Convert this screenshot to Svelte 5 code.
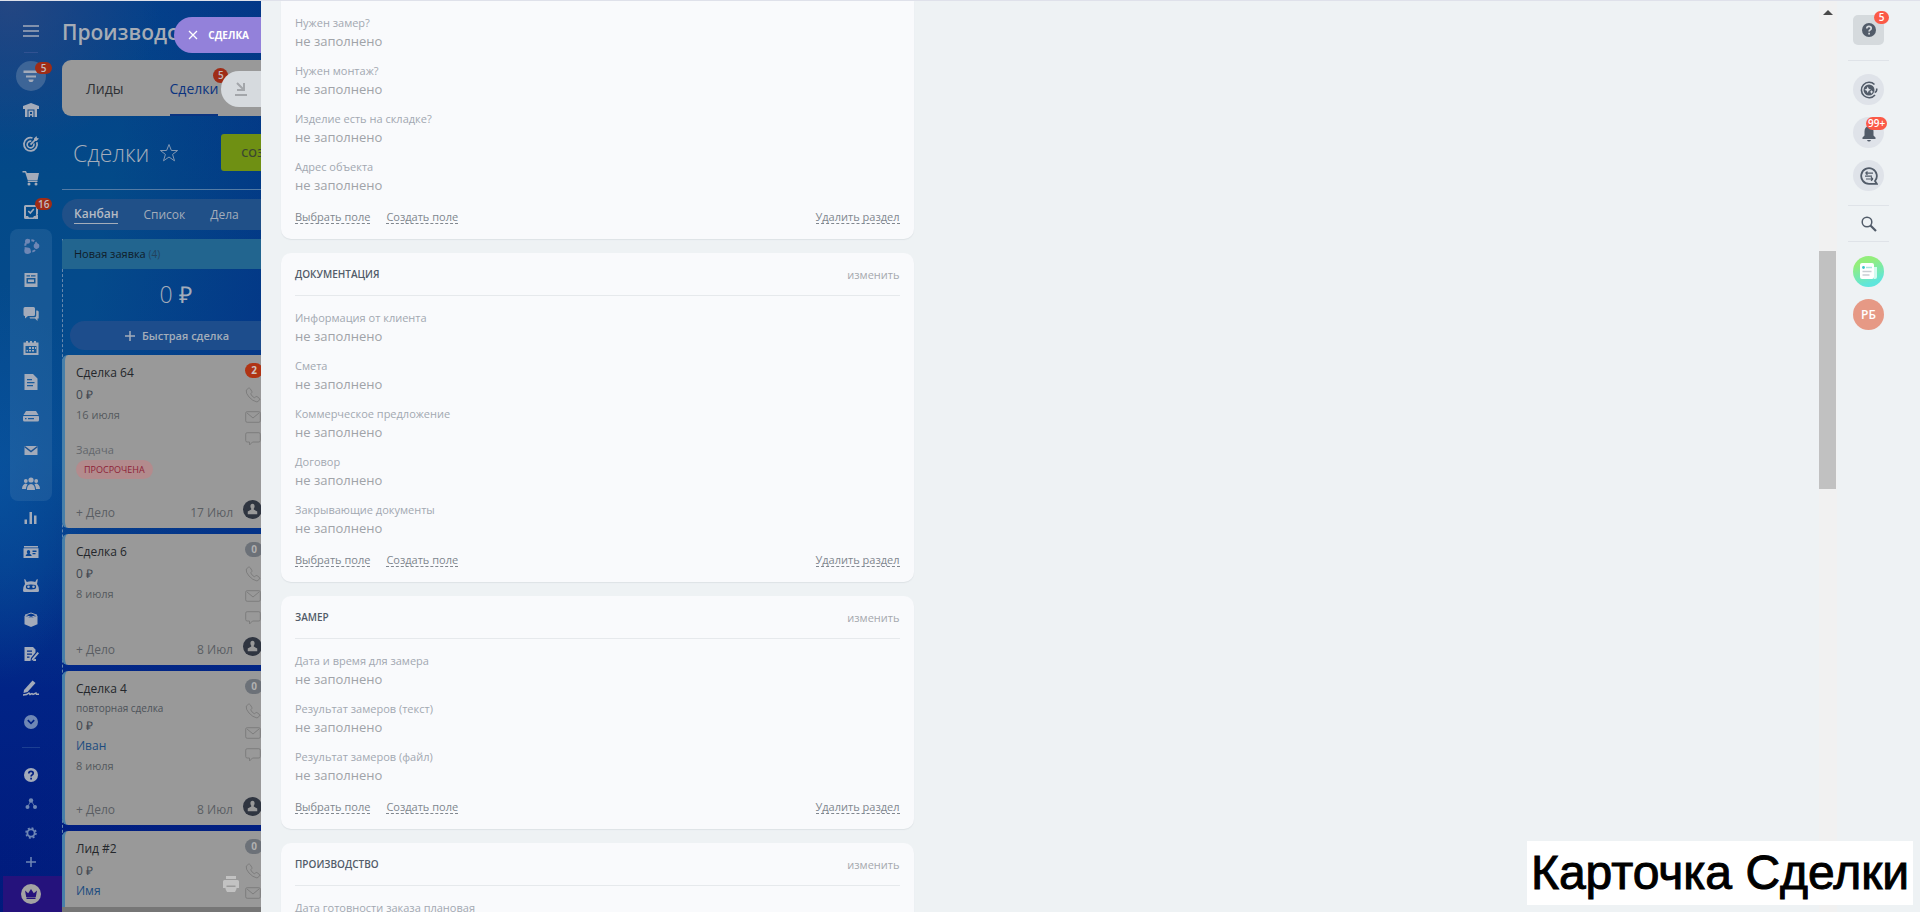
<script lang="ts">
	interface NavItem {
		icon: string;
		label: string;
		badge?: string;
		active?: boolean;
		dim?: boolean;
	}

	interface Deal {
		title: string;
		repeat?: boolean;
		client?: string;
		created: string;
		overdue?: boolean;
		due?: string;
		count: number;
	}

	interface Section {
		title?: string;
		fields: string[];
	}

	// 16x16 glyphs, painted with currentColor
	const icons: Record<string, string> = {
		menu: '<path d="M0 3h16M0 8h16M0 13h16" fill="none" stroke="currentColor" stroke-width="1.6"/>',
		funnel: '<path d="M.5 2.500h15v2.500H.5zM3 7.500h10v2H3zM5.500 11.500h5v1L9.300 14H6.700L5.500 12.500z"/>',
		house: '<path fill-rule="evenodd" d="M8 1 0 4v3h2V15h2.500V7.500h7V15H14V7h2V4zM5.500 8.500V15H7v-1.500h2V15h1.500V8.500zM7 10h2v2H7z"/>',
		target: '<g fill="none" stroke="currentColor"><path d="M13.800 6.200A6.600 6.600 0 1 1 9.500 2" stroke-width="1.800"/><path d="M10.800 7.500A3.400 3.400 0 1 1 8.300 5.200" stroke-width="1.600"/><path d="M7.500 8.700 13 3" stroke-width="1.800"/></g><path d="m11 2.500 2.500-2.500.5 2 2 .5L13.500 5H11z"/>',
		cart: '<path d="M-.5 1h3.500l.9 2H16l-1.500 7.500H4.800L2.200 2.500H-.5z"/><path d="M4.500 11h10v1H5z"/><circle cx="6" cy="14" r="1.500"/><circle cx="13" cy="14" r="1.500"/>',
		task: '<path fill-rule="evenodd" d="M2.500 1h11A1.500 1.500 0 0 1 15 2.500V10l-4 5H2.500A1.500 1.500 0 0 1 1 13.500v-11A1.500 1.500 0 0 1 2.500 1zM3 3v9h2l1 1.500h4l1-1.500h2V3z"/><path d="m5.300 7 2 2 3.500-4" fill="none" stroke="currentColor" stroke-width="1.600"/><path d="M13 11h2v4h-4z"/>',
		ring: '<circle cx="8" cy="8" r="5.800" fill="none" stroke="currentColor" stroke-width="2" stroke-dasharray="3 1.500"/><circle cx="4.500" cy="3.200" r="2.500"/><circle cx="13.500" cy="8" r="2.800"/><circle cx="4.500" cy="12.800" r="3.200"/>',
		feed: '<path fill-rule="evenodd" d="M1.500 1h13v14h-13zM3.500 3.200v1.300h3.500V3.200zM3.500 6v5.500h9V6zM5 7.500h6V10H5zM8 3.200v1.300h4.500V3.200z"/>',
		chat: '<path d="M2 1h8.500a1.500 1.500 0 0 1 1.500 1.500v6a1.500 1.500 0 0 1-1.500 1.500H5l-3 2.500V10a1.500 1.500 0 0 1-1.500-1.500v-6A1.500 1.500 0 0 1 2 1z"/><path d="M13.200 4.500h1a1.500 1.500 0 0 1 1.500 1.500v6.500h-1.200V15L12 12.500H7l-.5-1.200h5a1.700 1.700 0 0 0 1.700-1.700z"/>',
		calendar: '<path fill-rule="evenodd" d="M.5 2.500H3V1h2v1.500h2V1h2v1.500h2V1h2v1.500h2.500V15H.5zM2.500 6v7h11V6z"/><path d="M6 7h2v2H6zM9 7h2v2H9zM12 7h1v2h-1zM3.500 10h1.500v1.500H3.500zM6 10h2v1.500H6zM9 10h2v1.500H9z"/>',
		doc: '<path fill-rule="evenodd" d="M2 0h8l4.500 4.500V16h-13V0zM4 5h5v1.300H4zM4 8h7.500v1.300H4zM4 11h6v1.300H4z"/>',
		drive: '<path d="M3 3h10l2.500 4H.5z"/><path fill-rule="evenodd" d="M.8 8h14.400q.8 0 .8.800V12q0 1.500-1.500 1.500h-13Q0 13.500 0 12V8.800Q0 8 .8 8zM2 10v1.300h1.500V10zM5 10v1.300h6V10z"/>',
		mail: '<path d="M1.500 4h13v9h-13z"/><path d="m1.500 4.500 6.500 5 6.500-5" fill="none" stroke="#1a5292" stroke-width="1.500"/>',
		people: '<circle cx="8" cy="4" r="2.600"/><circle cx="2.800" cy="5" r="1.900"/><circle cx="13.200" cy="5" r="1.900"/><path d="M4 14c0-4 1.500-5.500 4-6 2.500.5 4 2 4 6zM-1 13C-1 9.500.8 8 2.800 7.500l1.800 1C3.500 9.700 3.200 11 3 13zM17 13c0-3.500-1.800-5-3.800-5.500l-1.800 1c1.100 1.200 1.400 2.500 1.600 4.500z"/>',
		bars: '<path d="M1.500 9.500H4V14H1.500zM6.500 2H9v12H6.500zM11 5.500h2.500V14H11z"/>',
		idcard: '<path d="M1 2h14v1.500H1z"/><path fill-rule="evenodd" d="M.5 4.300h15V14H.5zM5.500 6c-2 0-2 3-.8 3.600L2.800 11v1H8.500v-1L6.500 9.600C7.600 9 7.500 6 5.500 6zM9.500 6.500V8h4V6.500zM9.500 9v1.300h3V9z"/>',
		robot: '<path fill-rule="evenodd" d="m2 1 1.800 3q4.200-1.300 8.400 0L14 1l.8.500-.8 4.500Q16 8.500 16 12.500q0 1.500-1.500 1.500h-13Q0 14 0 12.500 0 8.500 2 6L1.200 1.500zM3.500 7Q2 9.500 4 11q4 .8 8 0 2-1.500.5-4-4.500-1-9 0z"/><circle cx="5.500" cy="8.800" r="1.300"/><circle cx="10.500" cy="8.800" r="1.300"/>',
		box: '<path d="M8 1 2 3.200 8 5.400l6-2.200z" fill="none" stroke="currentColor"/><path d="m1.500 3.700 6.500 2.300 6.500-2.300v8.600L8 15l-6.500-2.700z"/>',
		sign: '<path fill-rule="evenodd" d="M1.500 1H10l2.500 2.500v3L8 12l-.5 3h-6zM4 4.500v1.200h5V4.500zM4 7.500v1.200h5V7.500zM4 10.500v1.200h2.500v-1.200z"/><path d="m9 12.500 5.500-6.500 1.500 1.300-5.500 6.500-2 .7zM13 13h-1.500l-2 2H13z"/>',
		pen: '<path d="m1 10 8.500-9.500L12.500 3 4.500 12 .5 13z"/><path d="M0 15q4 0 6-2l1 1.500 2-1 1 1 3-1.500.5 1.300H16" fill="none" stroke="currentColor" stroke-width="1.400"/>',
		more: '<path fill-rule="evenodd" d="M8 1a7 7 0 1 0 0 14A7 7 0 0 0 8 1zM4.200 6.800l1.200-1.200L8 8.200l2.600-2.600 1.200 1.200L8 10.600z"/>',
		help: '<circle cx="8" cy="8" r="7"/><path d="M5.800 6.500Q5.800 4.300 8 4.300t2.200 2Q10.200 7.500 9 8q-.9.500-.9 1.500M8.100 10.800v1.600" fill="none" stroke="var(--hole)" stroke-width="1.700"/>',
		nodes: '<circle cx="8" cy="4.500" r="2.200"/><circle cx="4.500" cy="11" r="2"/><circle cx="12" cy="11" r="2"/><path d="m8 4.500-3.500 6.500M8 4.500l4 6.500" stroke="currentColor" stroke-width=".8"/>',
		gear: '<circle cx="8" cy="8" r="3.600" fill="none" stroke="currentColor" stroke-width="1.800"/><circle cx="8" cy="8" r="5" fill="none" stroke="currentColor" stroke-width="1.500" stroke-dasharray="2 1.927"/>',
		plus: '<path d="M8 3v10M3 8h10" fill="none" stroke="currentColor" stroke-width="1.500"/>',
		phone: '<path d="M3.500 1.200 1.300 3q-.8 3 2.700 7t8 5l2.600-2q.6-1-.3-1.700L12 9.600q-.8-.4-1.600.3l-.9.900Q7 9.800 5.700 6.800l1-1q.5-.7.100-1.500L5.200 1.700q-.8-1-1.700-.5z" fill="none" stroke="currentColor"/>',
		letter: '<rect x=".7" y="2.700" width="14.600" height="10.600" rx="1.500" fill="none" stroke="currentColor"/><path d="m2 4 6 5 6-5" fill="none" stroke="currentColor"/>',
		bubble: '<path d="M2.200 1.700h11.600q1.500 0 1.500 1.500v6.300q0 1.500-1.500 1.500H7.500L4.500 14v-3H2.200Q.7 11 .7 9.500V3.200q0-1.500 1.500-1.500z" fill="none" stroke="currentColor"/>',
		printer: '<path fill-rule="evenodd" d="M3 0h10v3H3zM1.500 4h13Q16 4 16 5.500V12h-2.500v1L12 16H4l-1.500-3v-1H0V5.500Q0 4 1.500 4zM3.500 9.500V11h9V9.500z"/>'
	};

	const nav: NavItem[] = [
		{ icon: 'funnel', label: 'CRM', badge: '5', active: true },
		{ icon: 'house', label: 'Склад' },
		{ icon: 'target', label: 'Маркетинг' },
		{ icon: 'cart', label: 'Магазин' },
		{ icon: 'task', label: 'Задачи', badge: '16' }
	];

	const groupNav: NavItem[] = [
		{ icon: 'ring', label: 'Совместная работа', dim: true },
		{ icon: 'feed', label: 'Лента' },
		{ icon: 'chat', label: 'Мессенджер' },
		{ icon: 'calendar', label: 'Календарь' },
		{ icon: 'doc', label: 'Документы' },
		{ icon: 'drive', label: 'Диск' },
		{ icon: 'mail', label: 'Почта' },
		{ icon: 'people', label: 'Группы' }
	];

	const tailNav: NavItem[] = [
		{ icon: 'bars', label: 'Аналитика' },
		{ icon: 'idcard', label: 'Сотрудники' },
		{ icon: 'robot', label: 'Автоматизация' },
		{ icon: 'box', label: 'Маркет' },
		{ icon: 'sign', label: 'Подпись' },
		{ icon: 'pen', label: 'Подпись для HR' },
		{ icon: 'more', label: 'Ещё', dim: true }
	];

	const toolNav: NavItem[] = [
		{ icon: 'help', label: 'Помощь' },
		{ icon: 'nodes', label: 'Карта сайта', dim: true },
		{ icon: 'gear', label: 'Настройки', dim: true },
		{ icon: 'plus', label: 'Добавить', dim: true }
	];

	const deals: Deal[] = [
		{ title: 'Сделка 64', created: '16 июля', overdue: true, due: '17 Июл', count: 2 },
		{ title: 'Сделка 6', created: '8 июля', due: '8 Июл', count: 0 },
		{ title: 'Сделка 4', repeat: true, client: 'Иван', created: '8 июля', due: '8 Июл', count: 0 },
		{ title: 'Лид #2', client: 'Имя', created: '8 июля', count: 0 }
	];

	const sections: Section[] = [
		{ fields: ['Нужен замер?', 'Нужен монтаж?', 'Изделие есть на складке?', 'Адрес объекта'] },
		{
			title: 'Документация',
			fields: ['Информация от клиента', 'Смета', 'Коммерческое предложение', 'Договор', 'Закрывающие документы']
		},
		{
			title: 'Замер',
			fields: ['Дата и время для замера', 'Результат замеров (текст)', 'Результат замеров (файл)']
		},
		{ title: 'Производство', fields: ['Дата готовности заказа плановая'] }
	];
</script>

{#snippet icon(name: string)}
	<svg class="icon" viewBox="0 0 16 16" aria-hidden="true">{@html icons[name]}</svg>
{/snippet}

{#snippet navButton(item: NavItem)}
	<button class="nav-item" class:active={item.active} class:dim={item.dim} aria-label={item.label}>
		<span class="nav-icon">{@render icon(item.icon)}</span>
		{#if item.badge}<span class="badge">{item.badge}</span>{/if}
	</button>
{/snippet}

<div class="app">
	<nav class="sidebar">
		<button class="burger" aria-label="Меню">{@render icon('menu')}</button>
		{#each nav as item (item.icon)}{@render navButton(item)}{/each}
		<div class="nav-group">
			{#each groupNav as item (item.icon)}{@render navButton(item)}{/each}
		</div>
		{#each tailNav as item (item.icon)}{@render navButton(item)}{/each}
		<div class="tools">
			{#each toolNav as item (item.icon)}{@render navButton(item)}{/each}
		</div>
		<button class="crown" aria-label="Тариф">
			<svg viewBox="0 0 20 20" aria-hidden="true">
				<circle cx="10" cy="10" r="10" fill="#a3a3a3" />
				<path d="m4 6.500 3.200 2.700L10 5l2.800 4.200L16 6.500 14.800 13H5.200zM5.500 13.500h9V15h-9z" fill="#25127c" />
			</svg>
		</button>
	</nav>

	<main class="board">
		<h1>Производство</h1>
		<div class="tabs">
			<a href="#leads">Лиды</a>
			<a href="#deals" class="current">Сделки<span class="badge">5</span></a>
		</div>
		<div class="heading">
			<h2>Сделки</h2>
			<svg class="star" viewBox="0 0 20 20" aria-hidden="true">
				<path d="m10 1.500 2.400 6h6.200l-5 3.900 1.900 6.400L10 14l-5.500 3.800 1.900-6.400-5-3.900h6.200z" />
			</svg>
			<button class="create">СОЗДАТЬ</button>
		</div>
		<div class="views">
			<a href="#kanban" class="current">Канбан</a>
			<a href="#list">Список</a>
			<a href="#todo">Дела</a>
		</div>
		<section class="column">
			<header>Новая заявка <span>(4)</span></header>
			<div class="sum">0 ₽</div>
			<button class="quick">{@render icon('plus')}Быстрая сделка</button>
			<div class="deals">
				{#each deals as deal (deal.title)}
					<article class="deal">
						<div class="deal-main">
							<div class="deal-text">
								<h3>{deal.title}</h3>
								{#if deal.repeat}<div class="repeat">повторная сделка</div>{/if}
								<div class="amount">0 ₽</div>
								{#if deal.client}<a class="client" href="#client">{deal.client}</a>{/if}
								<div class="date">{deal.created}</div>
								{#if deal.overdue}
									<div class="task">Задача</div>
									<span class="overdue">ПРОСРОЧЕНА</span>
								{/if}
							</div>
							<div class="contacts">
								<span class="count" class:hot={deal.count > 0}>{deal.count}</span>
								{@render icon('phone')}
								{@render icon('letter')}
								{@render icon('bubble')}
							</div>
						</div>
						{#if deal.due}
							<footer>
								<button>+ Дело</button>
								<span class="due">{deal.due}</span>
								<svg class="avatar" viewBox="0 0 18 18" aria-hidden="true">
									<circle cx="9" cy="9" r="9" fill="#2f3540" />
									<path d="M9 3.500c-2.500 0-2.300 3.500-1.200 4.500v1L4.500 11v2.500h9V11l-3.300-2V8C11.300 7 11.500 3.500 9 3.500z" fill="#999" />
								</svg>
							</footer>
						{/if}
					</article>
				{/each}
			</div>
		</section>
		<div class="hscroll"></div>
	</main>

	<div class="slider">
		<button class="slider-close">
			<svg viewBox="0 0 10 10" aria-hidden="true"><path d="m1 1 8 8M9 1 1 9" /></svg>
			СДЕЛКА
		</button>
		<button class="slider-collapse" aria-label="Свернуть">
			<svg viewBox="0 0 14 14" aria-hidden="true"><path d="m3 1 6 6M10 1v7H3M1 13h12" /></svg>
		</button>
		<button class="slider-print" aria-label="Печать">{@render icon('printer')}</button>

		<div class="card-area">
			<div class="sections">
				{#each sections as section}
					<section class="panel">
						{#if section.title}
							<header>
								<h3>{section.title}</h3>
								<button>изменить</button>
							</header>
						{/if}
						<dl>
							{#each section.fields as field (field)}
								<div class="field">
									<dt>{field}</dt>
									<dd>не заполнено</dd>
								</div>
							{/each}
						</dl>
						<footer>
							<a href="#pick">Выбрать поле</a>
							<a href="#new">Создать поле</a>
							<a href="#remove" class="remove">Удалить раздел</a>
						</footer>
					</section>
				{/each}
			</div>
		</div>

		<div class="scrollbar">
			<svg viewBox="0 0 10 5" aria-hidden="true"><path d="M5 0 10 5H0z" fill="#4a4a4a" /></svg>
			<div class="thumb"></div>
		</div>

		<aside class="rail">
			<button class="rail-help" aria-label="Помощь">
				{@render icon('help')}
				<span class="badge">5</span>
			</button>
			<hr />
			<div class="rounds">
				<button aria-label="Ассистент">
					<svg viewBox="0 0 18 18" aria-hidden="true">
						<path d="M14.500 3.500A7.700 7.700 0 1 0 15 14M16.700 7.500v1.500q0 2-2 2.500" fill="none" stroke="currentColor" stroke-width="1.600" />
						<circle cx="9" cy="9" r="5.500" />
						<path d="m7.700 5.500 1 2.300 2.300 1-2.300 1-1 2.300-1-2.300-2.300-1 2.300-1zM11.500 9l.6 1.300 1.400.6-1.400.6-.6 1.400-.6-1.400-1.300-.6 1.300-.6z" fill="#dfe3e9" />
					</svg>
				</button>
				<button aria-label="Уведомления">
					<svg viewBox="0 0 18 18" aria-hidden="true">
						<path d="M9 2q-4.500.5-4.500 5.500v4L2.500 13.500V15h13v-1.500l-2-2v-4Q13.500 2.500 9 2zM7 16h4q-.5 1.500-2 1.500T7 16z" />
					</svg>
					<span class="badge">99+</span>
				</button>
				<button aria-label="Чаты">
					<svg viewBox="0 0 18 18" aria-hidden="true">
						<path d="M16.800 16.800H9A7.800 7.800 0 1 1 15 14z" fill="none" stroke="currentColor" stroke-width="1.800" />
						<path d="M5.500 6.200H13M5.500 6.200l2-1.700M5.500 6.200l2 1.500M5 9.200h7M13 12H6M13 12l-2-1.700M13 12l-2 1.700" fill="none" stroke="currentColor" stroke-width="1.200" />
					</svg>
				</button>
			</div>
			<hr />
			<button class="search" aria-label="Поиск">
				<svg viewBox="0 0 16 16" aria-hidden="true">
					<circle cx="6" cy="6" r="4.800" fill="none" stroke="currentColor" stroke-width="1.500" />
					<path d="m9.500 9.500 5.500 5.500" stroke="currentColor" stroke-width="2.200" />
				</svg>
			</button>
			<hr />
			<div class="people">
				<button class="news" aria-label="Новости">
					<svg viewBox="0 0 18 18" aria-hidden="true">
						<path d="M14 4h3v10q0 2-2 2h-1z" fill="#d3fbf0" />
						<rect x="0" y="0" width="14" height="16" rx="2" fill="#fff" />
						<path d="M6 4.500h6" stroke="#a8e8df" stroke-width="1.500" />
						<circle cx="3.500" cy="4.500" r="1.400" fill="#3cc8c8" />
						<path d="M2.500 8.500h9M2.500 12h7" stroke="#c9ced3" stroke-width="1.300" />
					</svg>
				</button>
				<button class="user">РБ</button>
			</div>
		</aside>
	</div>

	<div class="caption">Карточка Сделки</div>
</div>

<style>
	:global(body) {
		margin: 0;
		overflow: hidden;
	}

	.app {
		position: relative;
		display: flex;
		height: 100vh;
		box-sizing: border-box;
		overflow: hidden;
		border-top: 1px solid #dfe1ea;
		font-family: 'Open Sans', sans-serif;
		background:
			radial-gradient(circle at 10px 0, rgba(44, 72, 128, 0.8), transparent 150px),
			radial-gradient(ellipse 90px 200px at 0 480px, rgba(9, 86, 165, 0.6), transparent),
			linear-gradient(100deg, transparent 140px, rgba(2, 34, 130, 0.45) 320px),
			linear-gradient(#04408a, #034a88 20%, #064a90 50%, #043c8c 62%, #012386 76%, #001a7c);
	}

	button {
		border: 0;
		padding: 0;
		background: none;
		font: inherit;
		color: inherit;
	}

	a {
		color: inherit;
		text-decoration: none;
	}

	h1,
	h2,
	h3,
	dl,
	dd {
		margin: 0;
		font-weight: 400;
	}

	.icon {
		display: block;
		flex: none;
		width: 16px;
		height: 16px;
		fill: currentColor;
		overflow: visible;
	}

	.badge {
		position: absolute;
		box-sizing: border-box;
		min-width: 15px;
		padding: 0 3px;
		border-radius: 8px;
		background: #9f2c16;
		color: #c3bcc0;
		font-size: 10px;
		font-weight: 600;
		line-height: 12px;
		text-align: center;
	}

	.sidebar {
		--hole: #021f80;
		display: flex;
		flex: 0 0 62px;
		flex-direction: column;
		align-items: center;
		color: #a3abba;
	}

	.burger {
		display: flex;
		justify-content: center;
		width: 14px;
		height: 30px;
		margin-top: 22px;
		margin-bottom: 6px;
		border-bottom: 1px solid #315292;
	}

	.nav-item {
		position: relative;
		display: flex;
		flex: none;
		align-items: center;
		justify-content: center;
		width: 42px;
		height: 34px;
	}

	.nav-icon {
		display: flex;
		align-items: center;
		justify-content: center;
		width: 30px;
		height: 30px;
		border-radius: 50%;
	}

	.active .nav-icon {
		background: #3d6597;
	}

	.nav-item .badge {
		top: 3px;
		left: 25px;
		min-width: 17px;
	}

	.dim {
		color: #6f87b5;
	}

	.nav-group {
		border-radius: 8px;
		background: rgba(80, 130, 180, 0.25);
	}

	.tools {
		display: flex;
		flex-direction: column;
		align-items: center;
		width: 18px;
		margin-top: 8px;
		padding-top: 12px;
		border-top: 1px solid #1c3f92;
	}

	.tools .nav-item {
		height: 29px;
	}

	.crown {
		flex: 0 0 36px;
		align-self: stretch;
		margin-left: 3px;
		padding-right: 4px;
		background: #25127c;
	}

	.crown svg {
		display: block;
		width: 20px;
		height: 20px;
		margin: 0 auto;
	}

	.board {
		flex: 0 0 199px;
		overflow: hidden;
		color: #a4adba;
	}

	.board h1 {
		margin: 12px 0 9px;
		font-size: 21px;
		font-weight: 600;
		line-height: 38px;
		white-space: nowrap;
		color: #a6acb5;
	}

	.tabs {
		display: flex;
		gap: 46px;
		height: 56px;
		padding: 0 24px;
		border-radius: 9px 0 0 9px;
		background: #999;
		color: #2f3236;
		font-size: 14px;
		line-height: 58px;
	}

	.tabs a {
		position: relative;
	}

	.tabs .current {
		height: 56px;
		color: #0b3480;
		box-shadow: inset 0 -2px #0b3480;
	}

	.tabs .badge {
		top: 8px;
		right: -10px;
		line-height: 15px;
	}

	.heading {
		display: flex;
		align-items: center;
		height: 73px;
		padding-left: 11px;
		border-bottom: 1px solid #537ba5;
	}

	.heading h2 {
		font-size: 23px;
		font-weight: 300;
	}

	.star {
		flex: none;
		width: 20px;
		height: 20px;
		margin: 0 42px 0 10px;
		fill: none;
		stroke: #8398b3;
	}

	.create {
		flex: none;
		height: 37px;
		padding: 0 20px;
		border-radius: 3px;
		background: #6f9013;
		color: #3b4730;
		font-size: 11px;
		font-weight: 600;
	}

	.views {
		display: flex;
		gap: 25px;
		align-items: center;
		height: 31px;
		margin-top: 9px;
		padding-left: 12px;
		border-radius: 16px 0 0 16px;
		background: #205088;
		font-size: 12px;
		line-height: 18px;
	}

	.views .current {
		border-bottom: 1px solid #a4adba;
		color: #b4bac3;
		font-weight: 600;
	}

	.column {
		width: 226px;
		margin-top: 9px;
		border-left: 1px dashed #6788ad;
		box-sizing: border-box;
	}

	.column > header {
		height: 30px;
		margin-left: -1px;
		padding-left: 12px;
		border-radius: 3px 0 0 0;
		background: #22658f;
		color: #101c28;
		font-size: 11px;
		line-height: 30px;
	}

	.column > header span {
		color: #23425c;
		font-size: 10px;
	}

	.sum {
		height: 52px;
		font-size: 23px;
		font-weight: 300;
		line-height: 50px;
		text-align: center;
	}

	.quick {
		display: flex;
		align-items: center;
		justify-content: center;
		gap: 4px;
		width: calc(100% - 14px);
		height: 29px;
		margin-left: 7px;
		border-radius: 15px;
		background: #1d4d8c;
		font-size: 11px;
		font-weight: 600;
	}

	.deals {
		display: flex;
		flex-direction: column;
		gap: 6px;
		margin-top: 5px;
		margin-left: -1px;
	}

	.deal {
		border-left: 3px solid #477fa9;
		border-radius: 6px;
		background: #999;
		color: #3f464f;
	}

	.deal-main {
		display: flex;
		justify-content: space-between;
		box-sizing: border-box;
		min-height: 99px;
		padding: 6px 27px 0 11px;
		font-size: 12px;
		line-height: 20px;
	}

	.deal-text {
		display: flex;
		flex-direction: column;
		align-items: flex-start;
		padding-bottom: 17px;
	}

	.deal h3 {
		color: #24272b;
		font-size: 12px;
		line-height: 24px;
	}

	.repeat {
		font-size: 10px;
		line-height: 15px;
		color: #4d5259;
	}

	.client {
		color: #1c4c80;
	}

	.date {
		font-size: 11px;
		color: #55595e;
	}

	.task {
		margin: 16px 0 1px;
		color: #63676c;
		font-size: 11px;
		line-height: 18px;
	}

	.overdue {
		padding: 0 8px;
		border-radius: 10px;
		background: #b38b8d;
		color: #8d2237;
		font-size: 9px;
		line-height: 19px;
	}

	.contacts {
		display: flex;
		flex-direction: column;
		gap: 6px;
		width: 16px;
		padding-top: 2px;
		color: #7d7d7d;
	}

	.count {
		width: 18px;
		margin-bottom: 3px;
		border-radius: 8px;
		background: #6c7178;
		color: #b0b0b0;
		font-size: 10px;
		font-weight: 700;
		line-height: 15px;
		text-align: center;
	}

	.hot {
		background: #b03414;
		color: #d0c4c0;
	}

	.deal footer {
		display: flex;
		align-items: center;
		height: 32px;
		padding: 0 26px 0 11px;
		color: #5a5e63;
		font-size: 12px;
	}

	.due {
		margin-left: auto;
	}

	.avatar {
		width: 19px;
		height: 19px;
		margin: -6px 0 0 10px;
	}

	.hscroll {
		position: absolute;
		bottom: 0;
		left: 62px;
		width: 199px;
		height: 5px;
		background: #767676;
	}

	.slider {
		position: relative;
		display: flex;
		flex: 1;
		min-width: 0;
		background: #eef2f4;
	}

	.slider-close,
	.slider-collapse,
	.slider-print {
		position: absolute;
		right: 100%;
		display: flex;
		align-items: center;
	}

	.slider-close {
		top: 16px;
		gap: 10px;
		height: 36px;
		padding: 0 12px 0 14px;
		border-radius: 18px 0 0 18px;
		background: #9381da;
		color: #fff;
		font-size: 10px;
		font-weight: 700;
	}

	.slider-close svg {
		width: 10px;
		height: 10px;
		stroke: #fff;
		stroke-width: 1.3;
	}

	.slider-collapse {
		top: 70px;
		width: 40px;
		height: 36px;
		border-radius: 18px 0 0 18px;
		background: #d6dade;
	}

	.slider-collapse svg {
		width: 14px;
		height: 14px;
		margin-left: 13px;
		fill: none;
		stroke: #a3a6aa;
		stroke-width: 2;
	}

	.slider-print {
		bottom: 20px;
		width: 38px;
		color: #c2c2c2;
	}

	.card-area {
		flex: 1;
		display: grid;
		grid-template-columns: 5fr 7fr;
		padding: 0 20px;
		overflow: hidden;
	}

	.sections {
		display: flex;
		flex-direction: column;
		gap: 14px;
	}

	.panel {
		flex: none;
		padding: 0 14px;
		border-radius: 10px;
		background: #f9fafc;
		box-shadow: 0 1px 1px rgba(80, 90, 110, 0.1);
	}

	.panel:first-child {
		border-radius: 0 0 10px 10px;
	}

	.panel header {
		display: flex;
		align-items: center;
		justify-content: space-between;
		height: 42px;
		border-bottom: 1px solid #e6e9ec;
		color: #a5a8ad;
		font-size: 11px;
	}

	.panel h3 {
		color: #525c69;
		font-size: 10px;
		font-weight: 600;
		text-transform: uppercase;
	}

	.panel dl {
		padding-top: 14px;
	}

	.field {
		height: 48px;
	}

	dt {
		color: #a2a8b1;
		font-size: 11px;
		line-height: 16px;
	}

	dd {
		color: #a0a3a8;
		font-size: 13px;
		line-height: 21px;
	}

	.panel footer {
		display: flex;
		gap: 16px;
		height: 30px;
		padding-top: 2px;
		color: #80868e;
		font-size: 11px;
		line-height: 15px;
	}

	.panel footer a {
		height: 14px;
		border-bottom: 1px dashed #80868e;
	}

	.panel footer .remove {
		margin-left: auto;
	}

	.scrollbar {
		flex: 0 0 18px;
		padding-top: 9px;
		box-sizing: border-box;
		background: #f1f1f1;
	}

	.scrollbar svg {
		display: block;
		width: 10px;
		height: 5px;
		margin: 0 0 0 4px;
	}

	.thumb {
		width: 17px;
		height: 26.4%;
		margin-top: 236px;
		background: #c1c1c1;
	}

	.rail {
		--hole: #d5dadd;
		display: flex;
		flex: 0 0 83px;
		flex-direction: column;
		align-items: center;
		box-sizing: border-box;
		padding: 14px 20px 0 0;
		color: #525c69;
	}

	.rail hr {
		width: 41px;
		height: 1px;
		margin: 0;
		border: 0;
		background: #dfe3e8;
	}

	.rail button {
		position: relative;
		display: flex;
		align-items: center;
		justify-content: center;
		width: 31px;
		height: 31px;
		border-radius: 50%;
		background: #dfe3e9;
	}

	.rail button svg {
		width: 18px;
		height: 18px;
		fill: currentColor;
	}

	.rail .rail-help {
		height: 30px;
		margin-bottom: 15px;
		border-radius: 5px;
		background: #d5dadd;
	}

	.rail .rail-help svg {
		width: 16px;
		height: 16px;
	}

	.rail .badge {
		top: -4px;
		left: 21px;
		background: #fb5a47;
		color: #fff;
		line-height: 13px;
	}

	.rail .rounds .badge {
		top: 0;
		left: 13px;
		padding: 0 2px;
	}

	.rounds {
		display: flex;
		flex-direction: column;
		gap: 12px;
		padding: 13px 0 14px;
	}

	.rail .search {
		height: 35px;
		background: none;
	}

	.rail .search svg {
		width: 16px;
		height: 16px;
	}

	.people {
		display: flex;
		flex-direction: column;
		gap: 12px;
		margin-top: 14px;
	}

	.rail .news {
		background: linear-gradient(160deg, #93ee7c 25%, #5fe6dc 80%);
	}

	.rail .user {
		background: #e69985;
		color: #fff;
		font-size: 12px;
		font-weight: 600;
	}

	.caption {
		position: absolute;
		right: 7px;
		bottom: 7px;
		padding: 0 4px;
		background: #fff;
		color: #000;
		font-family: 'Liberation Sans', Arial, sans-serif;
		font-size: 48px;
		line-height: 64px;
		-webkit-text-stroke: 1px #000;
	}
</style>
